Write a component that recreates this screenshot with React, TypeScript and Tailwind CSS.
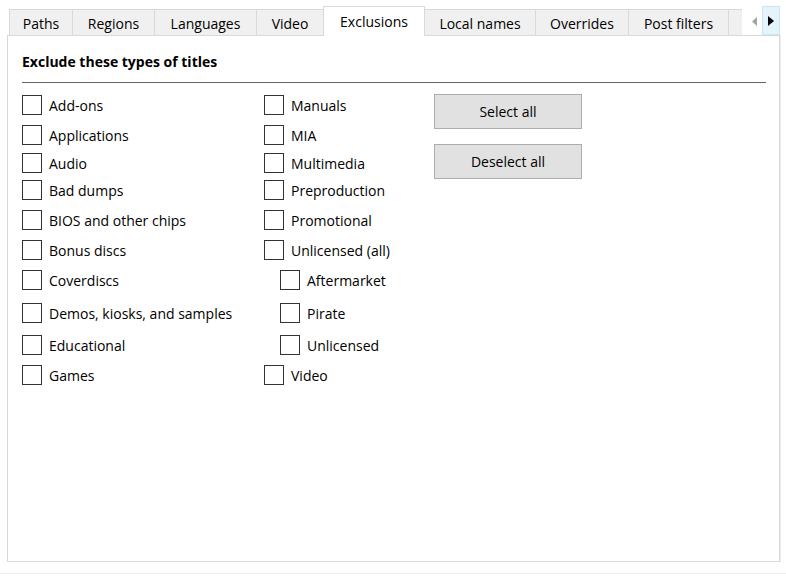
import React from 'react';

type Item = { label: string; indent?: boolean };

const tabs = [
  { label: 'Paths', w: 'w-[64px]' },
  { label: 'Regions', w: 'w-[83px]' },
  { label: 'Languages', w: 'w-[103px]' },
  { label: 'Video', w: 'w-[68px]' },
  { label: 'Exclusions', w: 'w-[102px]', active: true },
  { label: 'Local names', w: 'w-[112px]' },
  { label: 'Overrides', w: 'w-[94px]' },
  { label: 'Post filters', w: 'w-[101px]' },
];

const left: Item[] = [
  { label: 'Add-ons' },
  { label: 'Applications' },
  { label: 'Audio' },
  { label: 'Bad dumps' },
  { label: 'BIOS and other chips' },
  { label: 'Bonus discs' },
  { label: 'Coverdiscs' },
  { label: 'Demos, kiosks, and samples' },
  { label: 'Educational' },
  { label: 'Games' },
];

const right: Item[] = [
  { label: 'Manuals' },
  { label: 'MIA' },
  { label: 'Multimedia' },
  { label: 'Preproduction' },
  { label: 'Promotional' },
  { label: 'Unlicensed (all)' },
  { label: 'Aftermarket', indent: true },
  { label: 'Pirate', indent: true },
  { label: 'Unlicensed', indent: true },
  { label: 'Video' },
];

// gap above each row, taken from the screenshot (rows are not evenly spaced)
const gaps = ['mt-0', 'mt-[10px]', 'mt-[8px]', 'mt-[7px]', 'mt-[10px]', 'mt-[10px]', 'mt-[10px]', 'mt-[13px]', 'mt-[12px]', 'mt-[10px]'];

function Check({ item, i }: { item: Item; i: number }) {
  return (
    <label className={`flex items-center h-[20px] ${gaps[i]} ${item.indent ? 'pl-[16px]' : ''}`}>
      <span className="w-[20px] h-[20px] border border-[#333] bg-white shrink-0"></span>
      <span className="ml-[7px] pt-px text-[14px] text-black whitespace-nowrap leading-none">{item.label}</span>
    </label>
  );
}

export default function App() {
  return (
    <div className="w-[786px] h-[581px] bg-white relative overflow-hidden" style={{ fontFamily: '"Open Sans", "Noto Sans", sans-serif' }}>
      <div className="pt-[6px] pl-[7px]">
        <div className="flex items-end h-[30px] w-[773px]">
          <div className="flex items-end h-full pl-[2px] w-[735px] overflow-hidden">
            {tabs.map((t, i) => (
              <div
                key={t.label}
                className={`${t.w} shrink-0 flex items-center justify-center border border-[#d9d9d9] text-[14px] text-black ${i > 0 ? '-ml-px' : ''} ${
                  t.active ? 'h-[30px] bg-white border-b-0 relative z-10' : 'h-[27px] bg-[#f0f0f0] pt-[2px]'
                }`}
              >
                {t.label}
              </div>
            ))}
            <div className="w-[20px] h-[27px] -ml-px shrink-0 border border-[#d9d9d9] bg-[#f0f0f0]"></div>
          </div>
          <div className="flex items-end h-full ml-[5px]">
            <div className="w-[15px] h-[29px] flex items-center justify-center">
              <svg width="6" height="9" viewBox="0 0 6 9"><path d="M5 0 L0 4.5 L5 9 Z" fill="#a3a3a3" /></svg>
            </div>
            <div className="w-[18px] h-[29px] mb-px flex items-center justify-center bg-[#e5f3fb] border border-[#c8e6f5]">
              <svg width="6" height="10" viewBox="0 0 6 10"><path d="M0 0 L6 5 L0 10 Z" fill="#000" /></svg>
            </div>
          </div>
        </div>
        <div className="-mt-px w-[773px] h-[527px] border border-[#d9d9d9] bg-white shadow-[1px_0_0_#ececec] pl-[14px] pr-[13px]">
          <div className="pt-[16px] text-[14px] font-bold text-black leading-[20px]">Exclude these types of titles</div>
          <div className="mt-[10px] h-px bg-[#646464]"></div>
          <div className="flex mt-[12px]">
            <div className="w-[242px] flex flex-col">
              {left.map((it, i) => (
                <Check key={it.label} item={it} i={i} />
              ))}
            </div>
            <div className="w-[170px] flex flex-col">
              {right.map((it, i) => (
                <Check key={it.label} item={it} i={i} />
              ))}
            </div>
            <div className="flex flex-col -mt-px">
              <button className="w-[148px] h-[35px] bg-[#e1e1e1] border border-[#adadad] text-[14px] text-black">Select all</button>
              <button className="w-[148px] h-[35px] mt-[15px] bg-[#e1e1e1] border border-[#adadad] text-[14px] text-black">Deselect all</button>
            </div>
          </div>
        </div>
      </div>
      <div className="mt-[11px] h-px bg-[#f0f0f0]"></div>
    </div>
  );
}
